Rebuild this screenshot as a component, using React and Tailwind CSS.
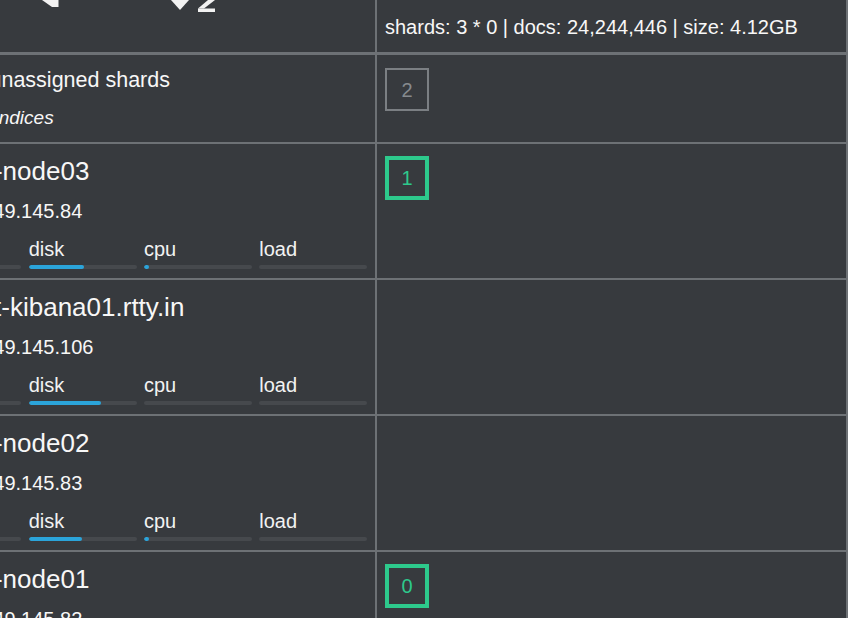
import React from "react";

const nodes = [
  { name: "es-node03", namePad: "pl-[53px]", ip: "10.49.145.84", heap: 38, disk: 51, cpu: 5, load: 0, shards: 1 },
  { name: "es-ext-kibana01.rtty.in", namePad: "pl-[17px]", ip: "10.49.145.106", heap: 30, disk: 67, cpu: 0, load: 0, shards: null },
  { name: "es-node02", namePad: "pl-[53px]", ip: "10.49.145.83", heap: 41, disk: 49, cpu: 5, load: 0, shards: null },
  { name: "es-node01", namePad: "pl-[53px]", ip: "10.49.145.82", heap: 36, disk: 50, cpu: 4, load: 0, shards: 0 },
];

function Bar({ label, value }) {
  return (
    <div className="flex flex-col">
      <span className="text-[20px] leading-[24px] text-[#f2f2f2]">{label}</span>
      <div className="mt-[4px] h-[4px] rounded-full bg-[#46494d] overflow-hidden">
        <div className="h-full rounded-full bg-[#2ba4da]" style={{ width: `${value}%` }} />
      </div>
    </div>
  );
}

function ShardBox({ value, muted }) {
  if (value === null || value === undefined) return null;
  return muted ? (
    <div className="w-[44px] h-[43px] border-2 border-[#7b7f83] flex items-center justify-center text-[20px] text-[#868a8e]">
      {value}
    </div>
  ) : (
    <div className="w-[44px] h-[44px] border-4 border-[#2dc98c] flex items-center justify-center text-[20px] text-[#2dc98c]">
      {value}
    </div>
  );
}

export default function App() {
  return (
    <div className="w-[848px] h-[618px] overflow-hidden bg-[#373a3e] text-[#f7f7f7] font-['Liberation_Sans',Arial,sans-serif]">
      <div className="-ml-[96px] w-[944px]">
        {/* header row */}
        <div className="flex h-[55px] border-b-[3px] border-[#6d7175]">
          <div className="w-[473px] pl-[9.5px] pr-[8px] border-r-2 border-[#6d7175]">
            <div className="flex items-start h-[12px] overflow-hidden">
              <svg className="ml-[128px]" width="17" height="8" viewBox="0 0 17 8">
                <polygon points="0,0 16.5,0 16.5,7 10,7" fill="#f2f2f2" />
              </svg>
              <svg className="ml-[112px]" width="45" height="12" viewBox="0 0 45 12">
                <polygon points="0,0 18,0 9,10" fill="#f2f2f2" />
                <polygon points="37,0 44,0 33,8.5 27,8.5" fill="#f2f2f2" />
                <rect x="27" y="8.5" width="17" height="3.5" fill="#f2f2f2" />
              </svg>
            </div>
          </div>
          <div className="w-[471px] pl-[8px] pt-[15px] border-r-2 border-[#6d7175]">
            <div className="text-[20px] leading-[24px] whitespace-nowrap">
              shards: 3 * 0 | docs: 24,244,446 | size: 4.12GB
            </div>
          </div>
        </div>

        {/* unassigned row */}
        <div className="flex h-[89px] border-b-2 border-[#6d7175]">
          <div className="w-[473px] pl-[9.5px] pr-[8px] pt-[13px] border-r-2 border-[#6d7175]">
            <div className="pl-[76px] text-[21.5px] leading-[25px] whitespace-nowrap">unassigned shards</div>
            <div className="pl-[81px] mt-[14px] text-[19px] leading-[22px] italic">indices</div>
          </div>
          <div className="w-[471px] pl-[8px] pt-[13px] border-r-2 border-[#6d7175]">
            <ShardBox value={2} muted />
          </div>
        </div>

        {nodes.map((n) => (
          <div key={n.name} className="flex h-[136px] border-b-2 border-[#6d7175]">
            <div className="w-[473px] pl-[9.5px] pr-[8px] pt-[12px] border-r-2 border-[#6d7175]">
              <div className={`${n.namePad} text-[26px] leading-[30px] whitespace-nowrap`}>{n.name}</div>
              <div className="pl-[52px] mt-[13px] text-[20px] leading-[24px]">{n.ip}</div>
              <div className="mt-[14px] grid grid-cols-4 gap-[7.5px]">
                <Bar label="heap" value={n.heap} />
                <Bar label="disk" value={n.disk} />
                <Bar label="cpu" value={n.cpu} />
                <Bar label="load" value={n.load} />
              </div>
            </div>
            <div className="w-[471px] pl-[8px] pt-[12px] border-r-2 border-[#6d7175]">
              <ShardBox value={n.shards} />
            </div>
          </div>
        ))}
      </div>
    </div>
  );
}
